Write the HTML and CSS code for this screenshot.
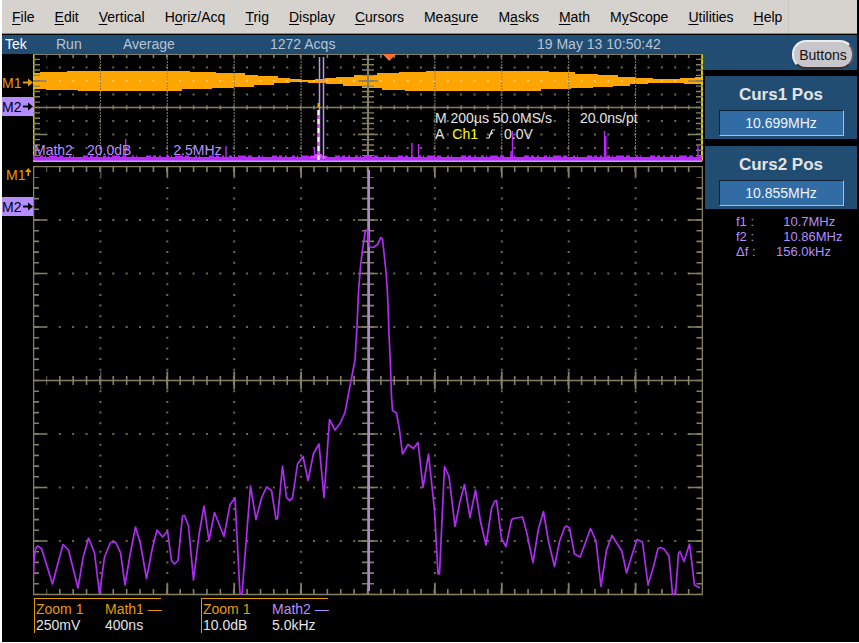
FILE: index.html
```
<!DOCTYPE html>
<html lang="en">
<head>
<meta charset="utf-8">
<title>Tek oscilloscope</title>
<link rel="stylesheet" href="styles.css">
</head>
<body>
<div class="scope">
  <nav class="menu" aria-label="Main">
    <a href="#"><u>F</u>ile</a>
    <a href="#"><u>E</u>dit</a>
    <a href="#"><u>V</u>ertical</a>
    <a href="#">H<u>o</u>riz/Acq</a>
    <a href="#"><u>T</u>rig</a>
    <a href="#"><u>D</u>isplay</a>
    <a href="#"><u>C</u>ursors</a>
    <a href="#">Mea<u>s</u>ure</a>
    <a href="#">M<u>a</u>sks</a>
    <a href="#"><u>M</u>ath</a>
    <a href="#">M<u>y</u>Scope</a>
    <a href="#"><u>U</u>tilities</a>
    <a href="#"><u>H</u>elp</a>
    <span class="menu-end"></span>
  </nav>

  <div class="work">
    <main class="screen">
      <header class="status">
        <span class="brand">Tek</span>
        <span>Run</span>
        <span>Average</span>
        <span>1272 Acqs</span>
        <time>19 May 13 10:50:42</time>
      </header>

      <section class="plot overview">
        <div class="gutter">
          <div class="marker m1">M1<svg width="10" height="9" viewBox="0 0 10 9"><path d="M0 3.500h5V0.500l5 4-5 4V5.500H0z"/></svg></div>
          <div class="marker m2">M2<svg width="10" height="9" viewBox="0 0 10 9"><path d="M0 3.500h5V0.500l5 4-5 4V5.500H0z"/></svg></div>
        </div>
        <div class="graph">
          <svg class="canvas" viewBox="33 54 670 108" preserveAspectRatio="none">
            <path class="burst" d="M33 73H40V72H67V71H190V72H216V73H245V75H258V76H278V78H290V79H302V80H315V79H325V78H336V77H354V75H377V73H399V72H426V71H549V72H575V74H598V75H618V77H635V78H653V79H680V78H695V77H702V84H684V83H648V84H630V86H613V87H593V88H571V89H541V91H405V90H382V88H362V86H343V84H326V83H308V82H290V83H274V85H254V87H234V88H212V89H182V91H78V90H46V89H33Z"/>
            <g class="grid">
              <path d="M33 54.500H702.500V161"/>
              <path d="M33 107.500H702" stroke-width="1.500"/>
              <path class="yellow" d="M33.500 54V161M702 54V161"/>
              <path class="rowdots" d="M46.400 67.500H700M46.400 94.500H700M46.400 121H700M46.400 134.500H700M46.400 148H700"/>
              <path class="rowdots hot" d="M46.400 81H700"/>
              <path class="coldots" d="M100.400 55V161M167.300 55V161M234.200 55V161M301.100 55V161M434.900 55V161M501.800 55V161M568.700 55V161M635.600 55V161"/>
              <path class="axis" d="M368 55V161"/>
              <path class="ticks5" d="M34 107.500V161M34 107.500V54M368 107.500V161M368 107.500V54M702 107.500V161M702 107.500V54"/>
              <path d="M33 81H47M33 134.500H47M358 81H378M358 134.500H378M688 81H702M688 134.500H702" stroke-width="1.500"/>
              <path class="toprow" d="M46.400 56H702M46.400 107.500H702"/>
            </g>
            <g class="noise">
              <path d="M33 159.500H702" stroke-width="5"/>
              <path d="M33 156.500H702" stroke-width="2" stroke-dasharray="2 5 3 2 1 3 8 2 4 6 2 2 1 9 5 2 3 3"/>
              <path d="M125.700 139V157M226 146V157M314.500 147V157M411.900 143V157M418.600 144V157M512.500 131V158M511 151V158M604.500 131V158M605.800 136V158M698 146V158"/>
              <path d="M310 158V156H315V154H322V156H327V158Z" fill="#e43cff" stroke="none"/>
            </g>
            <path d="M33 161.300H702" stroke="#bda0f2" stroke-width="1.400"/>
            <path d="M319.500 57V159M323.500 57V159" stroke="#b397f0" stroke-width="1.500"/>
            <path d="M318.500 110V160" stroke="#e050ff" stroke-width="2.500"/>
            <path d="M318.500 110V160" stroke="#fff" stroke-width="2" stroke-dasharray="5 4"/>
            <path d="M318.500 103V107" stroke="#ffa500" stroke-width="2"/>
            <path d="M382.500 54H396L389.200 61Z" fill="#ff7028"/>
          </svg>
          <div class="tag scale"><span>Math2</span><span>20.0dB</span><span>2.5MHz</span></div>
          <div class="tag timebase"><span>M 200µs 50.0MS/s</span><span>20.0ns/pt</span></div>
          <div class="tag trigger"><span>A</span><span class="ch">Ch1</span><svg width="10" height="10" viewBox="0 0 10 10"><path d="M0 9H3L6 1H9M3 6.500L7 3.500" fill="none" stroke="#e4e4e4" stroke-width="1.200"/></svg><span>0.0V</span></div>
        </div>
      </section>

      <section class="plot detail">
        <div class="gutter">
          <div class="marker m1">M1<svg width="8" height="10" viewBox="0 0 8 10"><path d="M3 10V5H0L4 0 8 5H5V10z"/></svg></div>
          <div class="marker m2">M2<svg width="10" height="9" viewBox="0 0 10 9"><path d="M0 3.500h5V0.500l5 4-5 4V5.500H0z"/></svg></div>
        </div>
        <div class="graph">
          <svg class="canvas" viewBox="33 166 670 430" preserveAspectRatio="none">
            <g class="grid">
              <rect x="33.500" y="166.500" width="669" height="428" stroke-width="1.500"/>
              <path class="rowdots" d="M46.400 220H700M46.400 273.500H700M46.400 327H700M46.400 434H700M46.400 487.500H700M46.400 541H700"/>
              <path class="coldots-wide" d="M100.400 177.200V594M167.300 177.200V594M234.200 177.200V594M301.100 177.200V594M434.900 177.200V594M501.800 177.200V594M568.700 177.200V594M635.600 177.200V594"/>
              <path d="M33 380.500H702M368 166V594" stroke-width="1.500"/>
              <path class="ticks10" d="M33 177.200V594M368 177.200V594M702.500 177.200V594"/>
              <path class="toprow edge" d="M46.400 169H700M46.400 592H700"/>
              <path class="toprow middle" d="M46.400 380.500H700"/>
              <path class="major" d="M100.400 171.500H700M100.400 589.500H700" stroke-width="11"/>
              <path class="major" d="M100.400 380.500H700" stroke-width="18"/>
              <path d="M33 220H47M33 273.500H47M33 327H47M33 434H47M33 487.500H47M33 541H47M358 220H378M358 273.500H378M358 327H378M358 434H378M358 487.500H378M358 541H378M688 220H702M688 273.500H702M688 327H702M688 434H702M688 487.500H702M688 541H702" stroke-width="1.700"/>
            </g>
            <path d="M368.800 170V591" stroke="#a98bc6" stroke-width="2.400"/>
            <polyline class="trace" points="33.500,575 34,560 35.500,549 37.500,546 41.500,548.500 46,563 52.500,584 58,563 63,544.500 68.500,550 73,568 78,588 83,558 88.500,538 94.500,553 99.500,594 104.500,557 110.500,542.500 115.500,542 120.500,552.500 125,585 130,555 135.500,527 140.500,544 146.500,578.500 152,550 157,530 162.500,537 167.500,531 171.500,560.500 174.500,564 178,560.500 182.500,516 184.500,515.500 188.500,526 193.500,580 199,535 204,506 209,540.500 214.500,512.500 224,536.500 230,504.500 235,498 240,594 242,594 250.500,486 256,519.500 261.500,498 266.500,487 271.500,490.500 276,519 277.500,519 282.500,466 286.500,497.500 289.500,500.500 292.500,498 297.500,464 303,456.500 308,480.500 313.500,453.500 319,444 324,497.500 329.500,419.500 335,430 340,423.500 345,412.500 349.500,388.500 355,360 357,326.500 358.500,291.500 360.500,266.500 362.500,250 365.500,230 368,231 369.500,247 373.500,247.500 377.500,244.500 381,237.500 382.500,239 386,271.500 387.500,293 389,333 390.500,366.500 391.500,396.500 392.500,410.500 396.500,413 399.500,430 402.500,454 408,444.500 413.500,448.500 418,442.500 423,487.500 428.500,454 434.500,510 438,574 439.500,574 444.500,466.500 449,476.500 455,526.500 460,501.500 464.500,484.500 470,517.500 475.500,490 480.500,521.500 486,545 491.500,508.500 494.500,501.500 496.500,500.500 501.500,538.500 506,546.500 511.500,520 513.500,518.500 522.500,517 526.500,531.500 533,562.500 538.500,528.500 543.500,511.500 548.500,541.500 554.500,566.500 559.500,541.500 564.500,527.500 566.500,526 569.500,528 574.500,554 580,557 585.500,542.500 590.500,528.500 596,541 601,586.500 606.500,550 612,535.500 622,551.500 626.500,573 632,555 637,539.500 642.500,542 648,585 653.500,566.500 658,548.500 660.500,547.500 664,549 669,556 672.500,594 675.500,594 678.500,553.500 680,551.500 684,561.500 689.500,544 694.500,585 700,588"/>
          </svg>
        </div>
      </section>

      <footer class="legend">
        <div class="zoom"><span>Zoom 1</span><span>Math1 —</span><b>250mV</b><b>400ns</b></div>
        <div class="zoom"><span>Zoom 1</span><span class="lilac">Math2 —</span><b>10.0dB</b><b>5.0kHz</b></div>
      </footer>
    </main>

    <aside class="side">
      <div class="side-top"><button type="button">Buttons</button></div>
      <div class="panel">
        <label for="c1">Curs1 Pos</label>
        <input id="c1" type="text" value="10.699MHz">
      </div>
      <div class="panel">
        <label for="c2">Curs2 Pos</label>
        <input id="c2" type="text" value="10.855MHz">
      </div>
      <dl class="readout">
        <dt>f1 :</dt><dd>&#8199;10.7MHz</dd>
        <dt>f2 :</dt><dd>&#8199;10.86MHz</dd>
        <dt>Δf :</dt><dd>156.0kHz</dd>
      </dl>
    </aside>
  </div>
</div>
</body>
</html>
```
FILE: styles.css
```
* { box-sizing: border-box; }

body {
  margin: 0;
  background: #000;
  font: 14px/16px "Liberation Sans", Arial, sans-serif;
  color: #e4e4e4;
}

.scope {
  min-height: 100vh;
  padding: 0 2px;
  border-bottom: 1px solid #fff;
  background: linear-gradient(90deg, #fff 2px, #000 2px);
}

.menu {
  display: flex;
  gap: 20px;
  height: 34px;
  padding: 0 0 0 10px;
  align-items: center;
  background: #d6d3ce;
  border-bottom: 1px solid #8a8880;
}
.menu a { color: #000; text-decoration: none; }
.menu u { text-underline-offset: 2px; }
.menu-end {
  align-self: stretch;
  width: 1px;
  margin-left: -14px;
  background: #c8c5c8;
}

.work {
  display: grid;
  grid-template-columns: 1fr 154px;
  padding-top: 1px;
}

.status {
  display: grid;
  grid-template-columns: 51px 67px 147px 267px 1fr;
  height: 19px;
  padding-left: 3px;
  line-height: 18px;
  background: #214d73;
  color: #b9c3d2;
}
.brand { color: #fff; }

.plot {
  display: grid;
  grid-template-columns: 31px 1fr;
}
.overview { margin-bottom: 4px; }
.graph { position: relative; }
.canvas { display: block; width: 100%; height: auto; }

.marker {
  display: flex;
  align-items: center;
  justify-content: space-between;
  height: 19px;
}
.marker svg { fill: currentColor; }
.m1 { color: #e79a00; }
.m2 { background: #b48eff; color: #000; }
.overview .gutter { padding-top: 19px; }
.overview .m2 { margin-top: 5px; }
.detail .m1 { padding: 1px 1px 0 4px; align-items: flex-start; }
.detail .m2 { margin-top: 12px; }

.tag {
  position: absolute;
  display: flex;
  white-space: pre;
}
.scale { left: 1px; top: 88px; color: #b48eff; gap: 14px; }
.scale span:last-child { margin-left: 28px; }
.timebase { left: 402px; top: 56px; gap: 28px; }
.trigger { left: 402px; top: 72px; gap: 8px; align-items: center; }
.ch { color: #ff0; }

.grid { fill: none; stroke: #858064; stroke-width: 1; }
.grid .yellow { stroke: #d4d000; stroke-width: 2; }
.rowdots { stroke: #6e6a50; stroke-width: 2; stroke-dasharray: 2 11.38; stroke-dashoffset: 1; }
.rowdots.hot { stroke: #ffc878; }
.coldots { stroke-dasharray: 2 1; }
.coldots-wide { stroke: #6e6a50; stroke-width: 2; stroke-dasharray: 2 8.7; stroke-dashoffset: 1; }
.axis { stroke-width: 2; }
.ticks5 { stroke-width: 12; stroke-dasharray: 1.4 3.95; stroke-dashoffset: 0.7; }
.ticks10 { stroke-width: 12; stroke-dasharray: 1.6 9.1; stroke-dashoffset: 0.8; }
.toprow { stroke-width: 4; stroke-dasharray: 1.6 11.78; stroke-dashoffset: 0.8; }
.toprow.edge { stroke-width: 6; }
.toprow.middle { stroke-width: 9; }
.major { stroke-dasharray: 1.8 65.1; stroke-dashoffset: 0.9; }

.burst { fill: #ffa500; }
.noise { fill: none; stroke: #b928ff; stroke-width: 1.4; }
.trace { fill: none; stroke: #ae2cf2; stroke-width: 1.7; stroke-linejoin: round; }

.legend {
  display: flex;
  gap: 40px;
  padding: 2px 0 0 32px;
}
.zoom {
  display: grid;
  grid-template-columns: 69px 1fr;
  width: 127px;
  height: 35px;
  padding: 3px 0 0 2px;
  background:
    linear-gradient(#e79a00, #e79a00) 0 0 / 100% 1px no-repeat,
    linear-gradient(#e79a00, #e79a00) 0 0 / 1px 100% no-repeat;
  color: #e79a00;
  white-space: nowrap;
}
.zoom b { font-weight: normal; color: #e4e4e4; }
.zoom .lilac { color: #b48eff; }

.side-top {
  display: flex;
  justify-content: flex-end;
  height: 35px;
  padding: 5px 3px 1px 0;
  background: #214d73;
}
.side-top button {
  width: 62px;
  padding: 0;
  font: inherit;
  color: #111;
  background: #c9c6cb;
  border: 2px solid;
  border-color: #eee #55565c #333 #eee;
  border-radius: 14px;
}

.panel {
  display: flex;
  flex-direction: column;
  align-items: center;
  height: 63px;
  margin: 6px 0 0 2px;
  padding-top: 9px;
  background: #214d73;
}
.panel + .panel { margin-top: 7px; }
.panel label { font-size: 17px; font-weight: bold; line-height: 20px; }
.panel input {
  width: 125px;
  height: 26px;
  margin-top: 5px;
  padding: 0;
  font: inherit;
  text-align: center;
  color: #f0f4fa;
  background: #316ca5;
  border: 1px solid;
  border-color: #0d2238 #a8bed4 #a8bed4 #0d2238;
}

.readout {
  display: grid;
  grid-template-columns: 40px 1fr;
  margin: 5px 0 0 33px;
  font-size: 13px;
  line-height: 15px;
  color: #b48eff;
}
.readout dd { margin: 0; }
```
